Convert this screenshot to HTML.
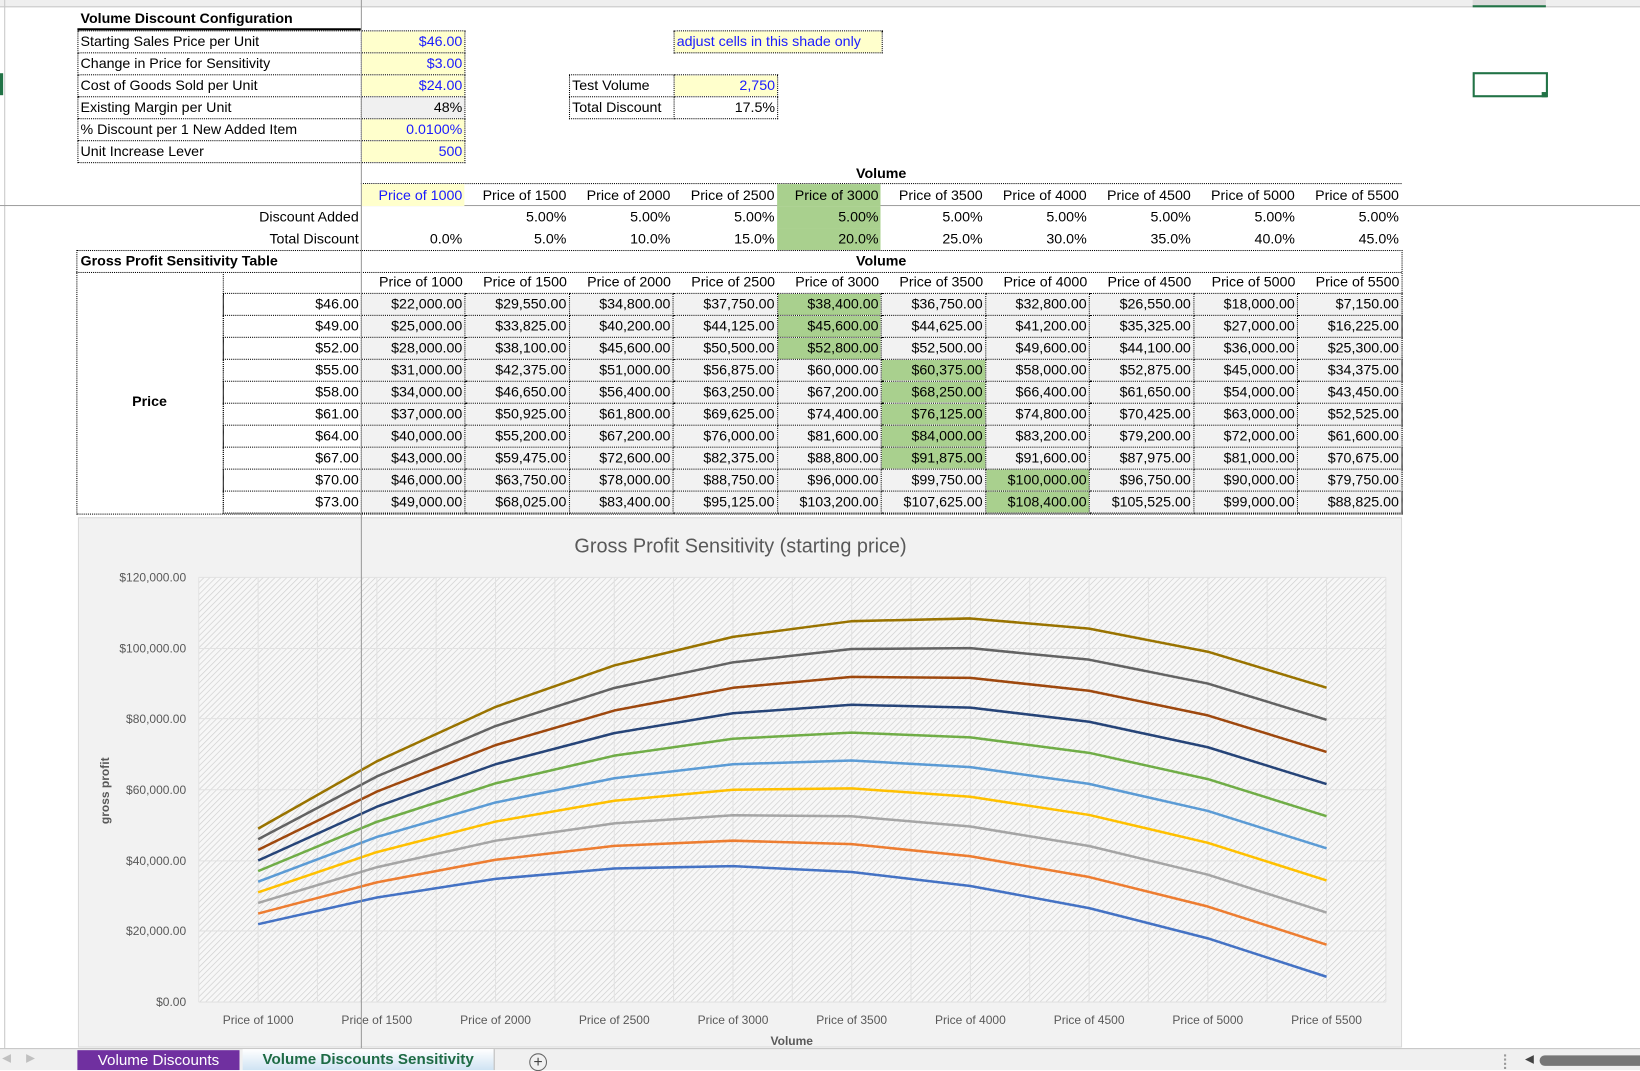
<!DOCTYPE html>
<html><head><meta charset="utf-8"><style>
html,body{margin:0;padding:0;background:#fff;overflow:hidden;width:1640px;height:1069px}
#w{position:absolute;left:0;top:0;width:1568px;height:1022px;transform:scale(1.04592,1.04599);transform-origin:0 0;font-family:"Liberation Sans",sans-serif;font-size:13.6px;color:#000}
.a{position:absolute}
table{border-collapse:collapse;table-layout:fixed;position:absolute}
td{height:20px;padding:0 2px;line-height:20px;white-space:nowrap;overflow:hidden}
.d td{border:1px dotted #000}
.nb td{height:21px;line-height:21px}
.r{text-align:right}.c{text-align:center}
.y{background:#ffffcc;color:#1a1aff}
.g{background:#a9d08e}
.gr{background:#f2f2f2}
.b{font-weight:bold}
</style></head><body><div id="w">
<div class="a" style="left:0;top:0;width:1568px;height:6px;background:#efefef;border-bottom:1px solid #c8c8c8"></div>
<div class="a" style="left:1408px;top:0;width:70px;height:5px;background:#dcdcdc;border-bottom:2px solid #217346"></div>
<div class="a" style="left:4px;top:0;width:1px;height:1002px;background:#c8c8c8"></div>
<div class="a" style="left:0;top:70px;width:3px;height:21px;background:#217346"></div>
<div class="a" style="left:0;top:196px;width:1568px;height:1px;background:#a0a0a0"></div>

<div class="a b" style="left:77px;top:10px;font-size:13.6px">Volume Discount Configuration</div>
<div class="a" style="left:74px;top:27px;width:271px;height:2px;background:#000"></div>
<table class="d" style="left:74px;top:29px">
<colgroup><col style="width:271px"><col style="width:99px"></colgroup>
<tr><td>Starting Sales Price per Unit</td><td class="r y">$46.00</td></tr>
<tr><td>Change in Price for Sensitivity</td><td class="r y">$3.00</td></tr>
<tr><td>Cost of Goods Sold per Unit</td><td class="r y">$24.00</td></tr>
<tr><td>Existing Margin per Unit</td><td class="r" style="background:#f0f0f0">48%</td></tr>
<tr><td>% Discount per 1 New Added Item</td><td class="r y">0.0100%</td></tr>
<tr><td>Unit Increase Lever</td><td class="r y">500</td></tr>
</table>
<table class="d" style="left:644px;top:29px"><colgroup><col style="width:199px"></colgroup><tr><td class="y">adjust cells in this shade only</td></tr></table>
<table class="d" style="left:544px;top:71px">
<colgroup><col style="width:100px"><col style="width:99px"></colgroup>
<tr><td>Test Volume</td><td class="r y">2,750</td></tr>
<tr><td>Total Discount</td><td class="r">17.5%</td></tr>
</table>
<div class="a" style="left:1408px;top:69px;width:68px;height:20px;border:2px solid #217346"></div>
<div class="a" style="left:1474px;top:88px;width:5px;height:5px;background:#217346"></div>

<div class="a b c" style="left:345px;top:155px;width:995px;line-height:21px">Volume</div>
<div class="a" style="left:345px;top:175px;width:995px;border-top:1px dotted #000"></div>
<table class="nb" style="left:73px;top:176px">
<colgroup><col style="width:272px"><col style="width:99px"><col style="width:99.5px"><col style="width:99.5px"><col style="width:99.5px"><col style="width:99.5px"><col style="width:99.5px"><col style="width:99.5px"><col style="width:99.5px"><col style="width:99.5px"><col style="width:99.5px"></colgroup>
<tr><td></td><td class="r y">Price of 1000</td><td class="r">Price of 1500</td><td class="r">Price of 2000</td><td class="r">Price of 2500</td><td class="r g">Price of 3000</td><td class="r">Price of 3500</td><td class="r">Price of 4000</td><td class="r">Price of 4500</td><td class="r">Price of 5000</td><td class="r">Price of 5500</td></tr>
<tr><td class="r">Discount Added</td><td></td><td class="r">5.00%</td><td class="r">5.00%</td><td class="r">5.00%</td><td class="r g">5.00%</td><td class="r">5.00%</td><td class="r">5.00%</td><td class="r">5.00%</td><td class="r">5.00%</td><td class="r">5.00%</td></tr>
<tr><td class="r">Total Discount</td><td class="r">0.0%</td><td class="r">5.0%</td><td class="r">10.0%</td><td class="r">15.0%</td><td class="r g">20.0%</td><td class="r">25.0%</td><td class="r">30.0%</td><td class="r">35.0%</td><td class="r">40.0%</td><td class="r">45.0%</td></tr>
</table>

<div class="a" style="left:73px;top:239px;width:1266px;height:251px;border:1px dotted #000"></div>
<div class="a b" style="left:77px;top:239px;line-height:21px">Gross Profit Sensitivity Table</div>
<div class="a b c" style="left:345px;top:239px;width:995px;line-height:21px">Volume</div>
<div class="a" style="left:73px;top:260px;width:1267px;border-top:1px dotted #000"></div>
<div class="a" style="left:213px;top:260px;height:231px;border-left:1px dotted #000"></div>
<div class="a b c" style="left:73px;top:376px;width:140px">Price</div>
<table class="d" style="left:213px;top:260px">
<colgroup><col style="width:132px"><col style="width:99px"><col style="width:99.5px"><col style="width:99.5px"><col style="width:99.5px"><col style="width:99.5px"><col style="width:99.5px"><col style="width:99.5px"><col style="width:99.5px"><col style="width:99.5px"><col style="width:99.5px"></colgroup>
<tr style="border:none"><td style="border:none"></td><td class="r" style="border:none">Price of 1000</td><td class="r" style="border:none">Price of 1500</td><td class="r" style="border:none">Price of 2000</td><td class="r" style="border:none">Price of 2500</td><td class="r" style="border:none">Price of 3000</td><td class="r" style="border:none">Price of 3500</td><td class="r" style="border:none">Price of 4000</td><td class="r" style="border:none">Price of 4500</td><td class="r" style="border:none">Price of 5000</td><td class="r" style="border:none">Price of 5500</td></tr>
<tr><td class="r">$46.00</td><td class="r gr">$22,000.00</td><td class="r gr">$29,550.00</td><td class="r gr">$34,800.00</td><td class="r gr">$37,750.00</td><td class="r g">$38,400.00</td><td class="r gr">$36,750.00</td><td class="r gr">$32,800.00</td><td class="r gr">$26,550.00</td><td class="r gr">$18,000.00</td><td class="r gr">$7,150.00</td></tr>
<tr><td class="r">$49.00</td><td class="r gr">$25,000.00</td><td class="r gr">$33,825.00</td><td class="r gr">$40,200.00</td><td class="r gr">$44,125.00</td><td class="r g">$45,600.00</td><td class="r gr">$44,625.00</td><td class="r gr">$41,200.00</td><td class="r gr">$35,325.00</td><td class="r gr">$27,000.00</td><td class="r gr">$16,225.00</td></tr>
<tr><td class="r">$52.00</td><td class="r gr">$28,000.00</td><td class="r gr">$38,100.00</td><td class="r gr">$45,600.00</td><td class="r gr">$50,500.00</td><td class="r g">$52,800.00</td><td class="r gr">$52,500.00</td><td class="r gr">$49,600.00</td><td class="r gr">$44,100.00</td><td class="r gr">$36,000.00</td><td class="r gr">$25,300.00</td></tr>
<tr><td class="r">$55.00</td><td class="r gr">$31,000.00</td><td class="r gr">$42,375.00</td><td class="r gr">$51,000.00</td><td class="r gr">$56,875.00</td><td class="r gr">$60,000.00</td><td class="r g">$60,375.00</td><td class="r gr">$58,000.00</td><td class="r gr">$52,875.00</td><td class="r gr">$45,000.00</td><td class="r gr">$34,375.00</td></tr>
<tr><td class="r">$58.00</td><td class="r gr">$34,000.00</td><td class="r gr">$46,650.00</td><td class="r gr">$56,400.00</td><td class="r gr">$63,250.00</td><td class="r gr">$67,200.00</td><td class="r g">$68,250.00</td><td class="r gr">$66,400.00</td><td class="r gr">$61,650.00</td><td class="r gr">$54,000.00</td><td class="r gr">$43,450.00</td></tr>
<tr><td class="r">$61.00</td><td class="r gr">$37,000.00</td><td class="r gr">$50,925.00</td><td class="r gr">$61,800.00</td><td class="r gr">$69,625.00</td><td class="r gr">$74,400.00</td><td class="r g">$76,125.00</td><td class="r gr">$74,800.00</td><td class="r gr">$70,425.00</td><td class="r gr">$63,000.00</td><td class="r gr">$52,525.00</td></tr>
<tr><td class="r">$64.00</td><td class="r gr">$40,000.00</td><td class="r gr">$55,200.00</td><td class="r gr">$67,200.00</td><td class="r gr">$76,000.00</td><td class="r gr">$81,600.00</td><td class="r g">$84,000.00</td><td class="r gr">$83,200.00</td><td class="r gr">$79,200.00</td><td class="r gr">$72,000.00</td><td class="r gr">$61,600.00</td></tr>
<tr><td class="r">$67.00</td><td class="r gr">$43,000.00</td><td class="r gr">$59,475.00</td><td class="r gr">$72,600.00</td><td class="r gr">$82,375.00</td><td class="r gr">$88,800.00</td><td class="r g">$91,875.00</td><td class="r gr">$91,600.00</td><td class="r gr">$87,975.00</td><td class="r gr">$81,000.00</td><td class="r gr">$70,675.00</td></tr>
<tr><td class="r">$70.00</td><td class="r gr">$46,000.00</td><td class="r gr">$63,750.00</td><td class="r gr">$78,000.00</td><td class="r gr">$88,750.00</td><td class="r gr">$96,000.00</td><td class="r gr">$99,750.00</td><td class="r g">$100,000.00</td><td class="r gr">$96,750.00</td><td class="r gr">$90,000.00</td><td class="r gr">$79,750.00</td></tr>
<tr><td class="r">$73.00</td><td class="r gr">$49,000.00</td><td class="r gr">$68,025.00</td><td class="r gr">$83,400.00</td><td class="r gr">$95,125.00</td><td class="r gr">$103,200.00</td><td class="r gr">$107,625.00</td><td class="r g">$108,400.00</td><td class="r gr">$105,525.00</td><td class="r gr">$99,000.00</td><td class="r gr">$88,825.00</td></tr>
</table>

<svg class="a" style="left:0;top:0" width="1568" height="1022" viewBox="0 0 1568 1022">
<defs><pattern id="h" width="4" height="4" patternUnits="userSpaceOnUse" patternTransform="rotate(45)"><rect width="4" height="4" fill="#f7f7f7"/><line x1="0" y1="0" x2="0" y2="4" stroke="#cfcfcf" stroke-width="1.3"/></pattern></defs>
<rect x="75" y="495" width="1265" height="506" fill="#f2f2f2" stroke="#d9d9d9"/>
<text x="708" y="528" text-anchor="middle" font-family="Liberation Sans" font-size="19" fill="#595959">Gross Profit Sensitivity (starting price)</text>
<rect x="190" y="552" width="1135" height="406" fill="url(#h)"/>
<g stroke="#e2e2e2" stroke-width="1">
<line x1="190" y1="552" x2="1325" y2="552"/><line x1="190" y1="620" x2="1325" y2="620"/><line x1="190" y1="687" x2="1325" y2="687"/><line x1="190" y1="755" x2="1325" y2="755"/><line x1="190" y1="823" x2="1325" y2="823"/><line x1="190" y1="890" x2="1325" y2="890"/><line x1="190" y1="958" x2="1325" y2="958"/>
<line x1="190" y1="552" x2="190" y2="958"/><line x1="246.8" y1="552" x2="246.8" y2="958"/><line x1="303.5" y1="552" x2="303.5" y2="958"/><line x1="360.3" y1="552" x2="360.3" y2="958"/><line x1="417" y1="552" x2="417" y2="958"/><line x1="473.8" y1="552" x2="473.8" y2="958"/><line x1="530.5" y1="552" x2="530.5" y2="958"/><line x1="587.3" y1="552" x2="587.3" y2="958"/><line x1="644" y1="552" x2="644" y2="958"/><line x1="700.8" y1="552" x2="700.8" y2="958"/><line x1="757.5" y1="552" x2="757.5" y2="958"/><line x1="814.3" y1="552" x2="814.3" y2="958"/><line x1="871" y1="552" x2="871" y2="958"/><line x1="927.8" y1="552" x2="927.8" y2="958"/><line x1="984.5" y1="552" x2="984.5" y2="958"/><line x1="1041.3" y1="552" x2="1041.3" y2="958"/><line x1="1098" y1="552" x2="1098" y2="958"/><line x1="1154.8" y1="552" x2="1154.8" y2="958"/><line x1="1211.5" y1="552" x2="1211.5" y2="958"/><line x1="1268.3" y1="552" x2="1268.3" y2="958"/><line x1="1325" y1="552" x2="1325" y2="958"/>
</g>
<g font-family="Liberation Sans" font-size="11.5" fill="#595959" text-anchor="end">
<text x="178" y="556">$120,000.00</text><text x="178" y="624">$100,000.00</text><text x="178" y="691">$80,000.00</text><text x="178" y="759">$60,000.00</text><text x="178" y="827">$40,000.00</text><text x="178" y="894">$20,000.00</text><text x="178" y="962">$0.00</text>
</g>
<g font-family="Liberation Sans" font-size="11.5" fill="#595959" text-anchor="middle">
<text x="246.8" y="979">Price of 1000</text><text x="360.3" y="979">Price of 1500</text><text x="473.8" y="979">Price of 2000</text><text x="587.3" y="979">Price of 2500</text><text x="700.8" y="979">Price of 3000</text><text x="814.3" y="979">Price of 3500</text><text x="927.8" y="979">Price of 4000</text><text x="1041.3" y="979">Price of 4500</text><text x="1154.8" y="979">Price of 5000</text><text x="1268.3" y="979">Price of 5500</text>
<text x="757" y="999" font-weight="bold">Volume</text>
<text transform="translate(104,756) rotate(-90)" font-weight="bold">gross profit</text>
</g>
<g transform="translate(246.8,958) scale(113.5,-3.3833)" fill="none" stroke-width="2.4" stroke-linejoin="round">
<polyline vector-effect="non-scaling-stroke" stroke="#4472c4" points="0,22 1,29.55 2,34.8 3,37.75 4,38.4 5,36.75 6,32.8 7,26.55 8,18 9,7.15"/>
<polyline vector-effect="non-scaling-stroke" stroke="#ed7d31" points="0,25 1,33.825 2,40.2 3,44.125 4,45.6 5,44.625 6,41.2 7,35.325 8,27 9,16.225"/>
<polyline vector-effect="non-scaling-stroke" stroke="#a5a5a5" points="0,28 1,38.1 2,45.6 3,50.5 4,52.8 5,52.5 6,49.6 7,44.1 8,36 9,25.3"/>
<polyline vector-effect="non-scaling-stroke" stroke="#ffc000" points="0,31 1,42.375 2,51 3,56.875 4,60 5,60.375 6,58 7,52.875 8,45 9,34.375"/>
<polyline vector-effect="non-scaling-stroke" stroke="#5b9bd5" points="0,34 1,46.65 2,56.4 3,63.25 4,67.2 5,68.25 6,66.4 7,61.65 8,54 9,43.45"/>
<polyline vector-effect="non-scaling-stroke" stroke="#70ad47" points="0,37 1,50.925 2,61.8 3,69.625 4,74.4 5,76.125 6,74.8 7,70.425 8,63 9,52.525"/>
<polyline vector-effect="non-scaling-stroke" stroke="#264478" points="0,40 1,55.2 2,67.2 3,76 4,81.6 5,84 6,83.2 7,79.2 8,72 9,61.6"/>
<polyline vector-effect="non-scaling-stroke" stroke="#9e480e" points="0,43 1,59.475 2,72.6 3,82.375 4,88.8 5,91.875 6,91.6 7,87.975 8,81 9,70.675"/>
<polyline vector-effect="non-scaling-stroke" stroke="#636363" points="0,46 1,63.75 2,78 3,88.75 4,96 5,99.75 6,100 7,96.75 8,90 9,79.75"/>
<polyline vector-effect="non-scaling-stroke" stroke="#997300" points="0,49 1,68.025 2,83.4 3,95.125 4,103.2 5,107.625 6,108.4 7,105.525 8,99 9,88.825"/>
</g>
</svg>
<div class="a" style="left:345px;top:0;width:1px;height:1002px;background:#9a9a9a;z-index:5"></div>

<div class="a" style="left:0;top:1002px;width:1568px;height:20px;background:#f0f0f0;border-top:1px solid #c6c6c6;z-index:6">
<span class="a" style="left:2px;top:2px;color:#c0c0c0;font-size:11px">&#9664;</span>
<span class="a" style="left:25px;top:2px;color:#c0c0c0;font-size:11px">&#9654;</span>
<div class="a" style="left:74px;top:1px;width:155px;height:19px;background:#7030a0;color:#fff;font-size:14.5px;text-align:center;line-height:20px">Volume Discounts</div>
<div class="a" style="left:232px;top:0;width:240px;height:20px;background:linear-gradient(#ffffff,#cfe3f3);color:#1e6b45;font-weight:bold;font-size:14.5px;text-align:center;line-height:21px;border-right:1px solid #bbb">Volume Discounts Sensitivity</div>
<div class="a" style="left:506px;top:4px;width:15px;height:15px;border:1px solid #666;border-radius:50%;text-align:center;line-height:15px;font-size:15px;color:#444">+</div>
<div class="a" style="left:1438px;top:5px;width:2px;height:14px;border-left:2px dotted #999"></div>
<span class="a" style="left:1458px;top:3px;color:#444;font-size:11px">&#9664;</span>
<div class="a" style="left:1472px;top:6px;width:96px;height:10px;background:#777;border-radius:5px 0 0 5px"></div>
</div>
</div></body></html>
